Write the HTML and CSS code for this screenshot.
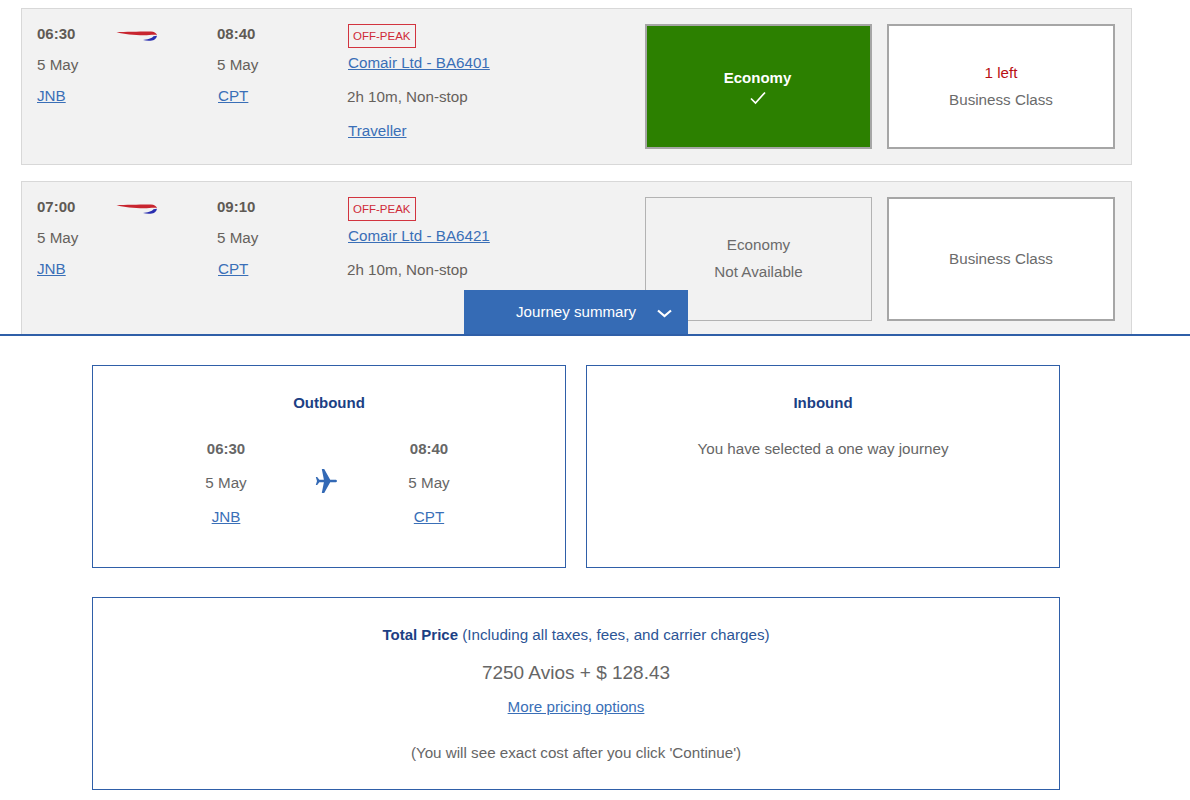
FILE: index.html
```html
<!DOCTYPE html>
<html lang="en">
<head>
  <meta charset="UTF-8"/>
  <title>Select flights</title>
  <link rel="stylesheet" href="styles.css">
</head>
<body>

<!-- flight list, cut off by the summary panel -->
<section class="flights">
  <div class="flight">
    <div class="leg leg-from">
      <b>06:30</b>
      <span>5 May</span>
      <a href="#">JNB</a>
    </div>
    <div class="carrier">
      <svg class="tail" viewBox="0 0 42 12" width="42" height="12"><path fill="#c8252f" d="M.5 3.200C10 3 25 2.500 35 2.600c3 .1 5 1.400 6 3.400-4-.5-8 .3-13 .3C18 6.300 8 5 .5 3.200z"/><path fill="#2a2fb0" d="M27 11c4-.5 9-1.500 10.500-3.700l3.500-.6c-.5 2.300-2 4.300-5 4.800-3 .5-6 .3-9-.5z"/></svg>
    </div>
    <div class="leg">
      <b>08:40</b>
      <span>5 May</span>
      <a href="#">CPT</a>
    </div>
    <div class="details">
      <span class="tag">OFF-PEAK</span>
      <a href="#" class="operator">Comair Ltd - BA6401</a>
      <span class="duration">2h 10m, Non-stop</span>
      <a href="#" class="cabin">Traveller</a>
    </div>
    <div class="fares">
      <div class="fare selected">
        <b>Economy</b>
        <svg viewBox="0 0 16 14" width="16" height="14"><path fill="none" stroke="#fff" stroke-width="1.700" d="M1 7.500l4.500 4.500L15 1.500"/></svg>
      </div>
      <div class="fare">
        <span class="left">1 left</span>
        <span>Business Class</span>
      </div>
    </div>
  </div>

  <div class="flight">
    <div class="leg leg-from">
      <b>07:00</b>
      <span>5 May</span>
      <a href="#">JNB</a>
    </div>
    <div class="carrier">
      <svg class="tail" viewBox="0 0 42 12" width="42" height="12"><path fill="#c8252f" d="M.5 3.200C10 3 25 2.500 35 2.600c3 .1 5 1.400 6 3.400-4-.5-8 .3-13 .3C18 6.300 8 5 .5 3.200z"/><path fill="#2a2fb0" d="M27 11c4-.5 9-1.500 10.500-3.700l3.500-.6c-.5 2.300-2 4.300-5 4.800-3 .5-6 .3-9-.5z"/></svg>
    </div>
    <div class="leg">
      <b>09:10</b>
      <span>5 May</span>
      <a href="#">CPT</a>
    </div>
    <div class="details">
      <span class="tag">OFF-PEAK</span>
      <a href="#" class="operator">Comair Ltd - BA6421</a>
      <span class="duration">2h 10m, Non-stop</span>
    </div>
    <div class="fares">
      <div class="fare none">
        <span>Economy</span>
        <span>Not Available</span>
      </div>
      <div class="fare">
        <span>Business Class</span>
      </div>
    </div>
  </div>

  <button class="summary-toggle">
    Journey summary
    <svg viewBox="0 0 15 9" width="15" height="9"><path fill="none" stroke="#fff" stroke-width="2.200" d="M1 1.500l6.500 5.500L14 1.500"/></svg>
  </button>
</section>

<!-- journey summary -->
<section class="summary">
  <div class="panels">
    <div class="panel">
      <h2>Outbound</h2>
      <div class="route">
        <div class="stop">
          <b>06:30</b>
          <span>5 May</span>
          <a href="#">JNB</a>
        </div>
        <svg class="plane" viewBox="0 0 24 24" width="24" height="24"><path fill="#3369b5" d="M23 12c0-.9-.9-1.300-1.800-1.300h-5L10.200 0H7.800l2.100 10.700H5.300L3.200 8H1.800L3 12l-1.200 4h1.400l2.100-2.700h4.600L7.800 24h2.400l6-10.700h5c.9 0 1.800-.4 1.800-1.300z"/></svg>
        <div class="stop">
          <b>08:40</b>
          <span>5 May</span>
          <a href="#">CPT</a>
        </div>
      </div>
    </div>
    <div class="panel">
      <h2>Inbound</h2>
      <p class="oneway">You have selected a one way journey</p>
    </div>
  </div>

  <div class="total">
    <p class="total-label"><b>Total Price</b> (Including all taxes, fees, and carrier charges)</p>
    <p class="price">7250 Avios + $ 128.43</p>
    <a href="#">More pricing options</a>
    <p class="note">(You will see exact cost after you click 'Continue')</p>
  </div>
</section>

</body>
</html>
```

FILE: styles.css
```css
*{box-sizing:border-box}
html,body{height:100%}
body{margin:0;height:800px;overflow:hidden;background:#fff;color:#666;font-family:"Liberation Sans",Arial,sans-serif;font-size:15.200px}
a{color:#3a6fb7}
p{margin:0}

/* flights */
.flights{position:relative;height:336px;overflow:hidden;padding:8px 58px 0 21px;border-bottom:2px solid #2f5fa8}
.flight{display:flex;height:157px;margin-bottom:16px;padding:15px;background:#f2f2f2;border:1px solid #d8d8d8}
.leg{width:130px;display:flex;flex-direction:column;align-items:flex-start;line-height:20px;gap:11px}
.leg b{color:#5f5a55;font-size:15px}
.leg span{color:#66615c}
.leg a{margin-left:1px}
.leg-from{width:79px}
.leg-from a{margin-left:0}
.carrier{width:101px;padding-top:5px}
.tail{display:block}
.details{width:298px;display:flex;flex-direction:column;align-items:flex-start;color:#66615c}
.tag{height:24px;margin-left:1px;padding:0 4px;border:1px solid #d2343f;color:#cf2a38;font-size:11.500px;line-height:22px}
.operator{margin:5px 0 0 1px;line-height:20px}
.duration{margin-top:14px;line-height:20px}
.cabin{margin:14px 0 0 1px;line-height:20px}
.fares{display:flex;gap:15px}
.fare{width:228px;height:125px;display:flex;flex-direction:column;align-items:center;justify-content:center;gap:7px;line-height:20px;background:#fff;border:2px solid #a6a6a6;color:#6b6b6b}
.fare:first-child{width:227px}
.fare.selected{padding:0 2px 0 0;background:#2c8000;color:#fff;gap:3px;font-size:15px}
.fare.none{background:#f2f2f2;border:1px solid #b3b3b3}
.flight + .flight .fare{height:124px;padding-bottom:1px}
.left{color:#b80f14}

.summary-toggle{position:absolute;left:464px;bottom:0;width:224px;height:44px;display:flex;align-items:center;justify-content:flex-end;gap:21px;padding:0 16px 2px 0;border:none;background:#356bb5;color:#fff;font-family:inherit;font-size:15.100px}
.summary-toggle svg{margin-top:5px}

/* summary */
.summary{padding:29px 130px 0 92px}
.panels{display:flex;gap:20px}
.panel{width:474px;height:203px;padding-top:27px;border:1px solid #2f5fa8;text-align:center}
.panel h2{margin:0;font-size:15px;line-height:20px;color:#1c3f84}
.route{display:flex;align-items:center;margin-top:26px;padding-left:73px}
.stop{width:120px;display:flex;flex-direction:column;align-items:center;gap:14px;line-height:20px}
.stop b{font-size:15px}
.plane{margin:0 31px 4px 28px}
.oneway{margin-top:26px;line-height:20px}
.total{margin-top:29px;height:193px;padding-top:27px;border:1px solid #2f5fa8;text-align:center;line-height:20px}
.total-label{color:#2c5596}
.total-label b{color:#1c3f84;font-size:15px}
.price{margin:16px 0 12px;font-size:19px;line-height:24px}
.note{margin-top:26px}
```
